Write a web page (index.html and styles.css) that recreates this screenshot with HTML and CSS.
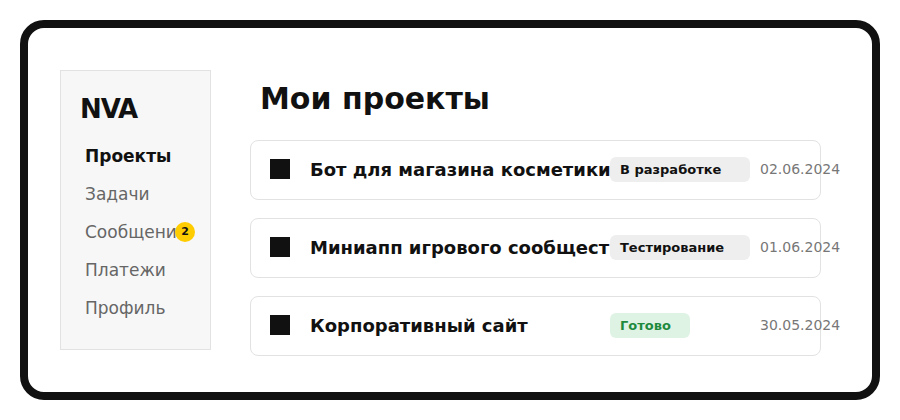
FILE: index.html
```html
<!DOCTYPE html>
<html lang="ru">
<head>
<meta charset="utf-8">
<title>NVA — Мои проекты</title>
<link rel="stylesheet" href="styles.css">
</head>
<body>
<div class="frame">
  <aside class="sidebar">
    <div class="logo">NVA</div>
    <nav class="nav">
      <a class="nav-item active">Проекты</a>
      <a class="nav-item">Задачи</a>
      <a class="nav-item">Сообщения<span class="count">2</span></a>
      <a class="nav-item">Платежи</a>
      <a class="nav-item">Профиль</a>
    </nav>
  </aside>
  <main class="main">
    <h1 class="title">Мои проекты</h1>
    <div class="projects">
      <div class="project">
        <span class="marker"></span>
        <span class="name">Бот для магазина косметики</span>
        <span class="status"><span class="badge wide">В разработке</span></span>
        <span class="date">02.06.2024</span>
      </div>
      <div class="project">
        <span class="marker"></span>
        <span class="name">Миниапп игрового сообщества</span>
        <span class="status"><span class="badge wide">Тестирование</span></span>
        <span class="date">01.06.2024</span>
      </div>
      <div class="project">
        <span class="marker"></span>
        <span class="name">Корпоративный сайт</span>
        <span class="status"><span class="badge done">Готово</span></span>
        <span class="date">30.05.2024</span>
      </div>
    </div>
  </main>
</div>
</body>
</html>
```
FILE: styles.css
```css
* {
  box-sizing: border-box;
}

body {
  margin: 0;
  background: #fff;
  font-family: "DejaVu Sans", "Noto Sans", sans-serif;
  color: #111;
}

.frame {
  margin: 20px;
  width: 860px;
  height: 380px;
  border: 8px solid #111;
  border-radius: 24px;
  padding: 42px 0 0 32px;
  display: flex;
  align-items: flex-start;
  gap: 39px;
}

/* left navigation */
.sidebar {
  width: 151px;
  height: 280px;
  flex: none;
  background: #f7f7f7;
  border: 1px solid #e2e2e2;
  padding: 22px 19px 20px;
}

.logo {
  font-size: 26px;
  line-height: 32px;
  font-weight: 700;
  letter-spacing: -1px;
  color: #111;
  margin-bottom: 12px;
}

.nav {
  display: flex;
  flex-direction: column;
}

.nav-item {
  position: relative;
  display: block;
  padding: 8px 5px;
  font-size: 17px;
  line-height: 22px;
  color: #666;
  white-space: nowrap;
}

.nav-item.active {
  color: #111;
  font-weight: 700;
}

.count {
  position: absolute;
  left: 95px;
  top: 9px;
  width: 20px;
  height: 20px;
  border-radius: 50%;
  background: #ffcc00;
  color: #111;
  font-size: 11px;
  font-weight: 700;
  line-height: 20px;
  text-align: center;
}

/* projects list */
.main {
  width: 571px;
  flex: none;
}

.title {
  margin: 11px 0 24px 10px;
  font-size: 30px;
  font-weight: 700;
  line-height: normal;
}

.projects {
  display: flex;
  flex-direction: column;
  gap: 18px;
}

.project {
  height: 60px;
  border: 1px solid #e2e2e2;
  border-radius: 8px;
  padding: 0 19px 2px;
  display: flex;
  align-items: center;
}

.marker {
  width: 20px;
  height: 20px;
  flex: none;
  background: #111;
  margin-right: 20px;
}

.name {
  width: 300px;
  flex: none;
  overflow: hidden;
  white-space: nowrap;
  font-size: 18px;
  font-weight: 700;
}

.status {
  width: 140px;
  flex: none;
  margin-right: 10px;
}

.badge {
  display: inline-block;
  height: 25px;
  line-height: 25px;
  padding: 0 10px;
  border-radius: 6px;
  background: #eee;
  color: #111;
  font-size: 13px;
  font-weight: 700;
  white-space: nowrap;
}

.badge.wide {
  width: 140px;
}

.badge.done {
  width: 80px;
  background: #dff3e5;
  color: #1e8a3e;
}

.date {
  flex: none;
  width: 40px;
  white-space: nowrap;
  font-size: 14px;
  color: #777;
}
```
